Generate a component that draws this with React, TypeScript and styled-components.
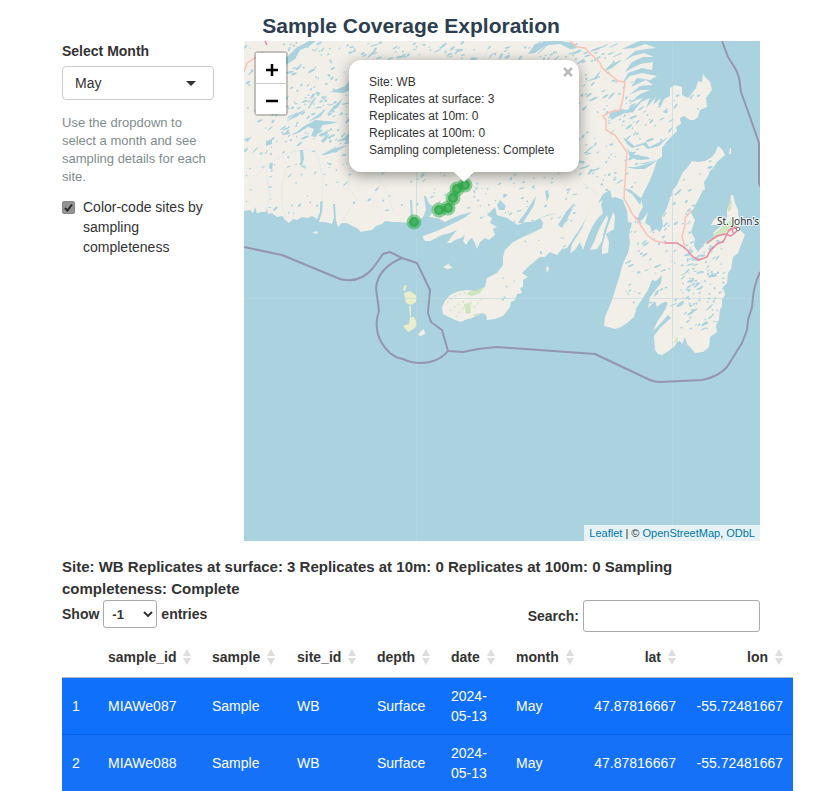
import React, { useState } from "react";
import styled, { createGlobalStyle } from "styled-components";

const GlobalStyle = createGlobalStyle`
  *, *::before, *::after { box-sizing: border-box; }
  body {
    margin: 0;
    background: #fff;
    color: #333;
    font: 14px/20px "Liberation Sans", Arial, sans-serif;
    overflow-x: hidden;
  }
`;

const Page = styled.main`
  padding: 14px 60px 0 62px;
`;

const Title = styled.h1`
  margin: 0 0 3px;
  font-size: 21px;
  line-height: 24px;
  text-align: center;
  color: #2c3e50;
`;

const Explorer = styled.section`
  display: grid;
  grid-template-columns: 152px minmax(0, 1fr);
  column-gap: 30px;
`;

const Sidebar = styled.aside`
  display: flex;
  flex-direction: column;
`;

const FieldLabel = styled.label`
  font-weight: bold;
  margin-bottom: 5px;
`;

const SelectShell = styled.span<{ $caretGap: number }>`
  display: inline-grid;
  align-items: center;
  > * { grid-area: 1 / 1; }
  > svg {
    justify-self: end;
    margin-right: ${(p) => p.$caretGap}px;
    pointer-events: none;
  }
`;

const MonthSelect = styled.select`
  appearance: none;
  width: 100%;
  height: 34px;
  padding: 0 36px 0 12px;
  border: 1px solid #ccc;
  border-radius: 4px;
  background: #fff;
  color: #333;
  font: inherit;
`;

const HelpText = styled.p`
  margin: 14px 0 11px;
  font-size: 13px;
  line-height: 18px;
  color: #7f8c8d;
`;

const CheckLabel = styled.label`
  display: flex;
  align-items: flex-start;
  gap: 8px;
`;

const CheckShell = styled.span`
  display: grid;
  flex: none;
  margin-top: 4px;
  > * { grid-area: 1 / 1; }
  > svg { pointer-events: none; }
`;

const CheckInput = styled.input`
  appearance: none;
  width: 13px;
  height: 13px;
  margin: 0;
  border: 1px solid #888;
  border-radius: 2px;
  &:checked { background: #929292; }
  &:not(:checked) + svg { visibility: hidden; }
`;

const MapFrame = styled.div`
  position: relative;
  height: 500px;
  overflow: hidden;
  background: #aad3df;
  font-size: 12px;
`;

const MapDrawing = styled.svg`
  display: block;
  width: 100%;
  height: 100%;
`;

const ZoomControl = styled.div`
  position: absolute;
  top: 10px;
  left: 10px;
  display: flex;
  flex-direction: column;
  border: 2px solid rgba(0, 0, 0, 0.2);
  border-radius: 4px;
  background-clip: padding-box;
`;

const ZoomButton = styled.button`
  display: grid;
  place-items: center;
  width: 30px;
  height: 30px;
  padding: 3px 0 0 1px;
  border: 0;
  background: #fff;
  color: #000;
  & + & {
    height: 31px;
    border-top: 1px solid #ccc;
  }
`;

const Popup = styled.div`
  position: absolute;
  top: 19px;
  left: 105px;
  width: 230px;
  padding: 14px 20px 13px;
  border-radius: 12px;
  background: #fff;
  box-shadow: 0 3px 14px rgba(0, 0, 0, 0.4);
  line-height: 17px;
  white-space: nowrap;
`;

const PopupTip = styled.svg`
  position: absolute;
  top: 100%;
  left: 50%;
  margin-left: -10px;
`;

const PopupClose = styled.button`
  position: absolute;
  top: 7px;
  right: 6px;
  display: grid;
  padding: 0;
  border: 0;
  background: none;
  color: #bbb;
`;

const Attribution = styled.div`
  position: absolute;
  right: 0;
  bottom: 0;
  padding: 0 5px;
  background: rgba(255, 255, 255, 0.7);
  font-size: 11px;
  line-height: 16px;
  a {
    color: #0078a8;
    text-decoration: none;
  }
`;

const Summary = styled.p`
  margin: 15px 0 0;
  font-size: 15px;
  font-weight: bold;
  line-height: 22px;
`;

const TableControls = styled.div`
  display: flex;
  justify-content: space-between;
  font-weight: bold;
`;

const ControlLabel = styled.label`
  display: flex;
  align-items: center;
  align-self: flex-start;
  gap: 4px;
`;

const LengthSelect = styled.select`
  appearance: none;
  width: 54px;
  height: 28px;
  padding: 0 20px 0 8px;
  border: 1px solid #aaa;
  border-radius: 3px;
  background: #fff;
  color: #333;
  font: bold 13px "Liberation Sans", Arial, sans-serif;
`;

const SearchInput = styled.input`
  width: 177px;
  height: 32px;
  padding: 5px;
  border: 1px solid #aaa;
  border-radius: 3px;
  font: inherit;
`;

const DataTable = styled.table`
  width: 100%;
  margin-top: 5px;
  border-collapse: separate;
  border-spacing: 0;
`;

const HeadCell = styled.th<{ $numeric?: boolean; $width: number }>`
  min-width: ${(p) => p.$width}px;
  padding: 10px;
  border-bottom: 1px solid #b5b5b5;
  text-align: ${(p) => (p.$numeric ? "right" : "left")};
`;

const SortButton = styled.button`
  display: inline-flex;
  align-items: center;
  gap: 7px;
  height: 20px;
  padding: 0;
  border: 0;
  background: none;
  color: #333;
  font: inherit;
  vertical-align: top;
`;

const BodyRow = styled.tr<{ $first: boolean }>`
  background: ${(p) => (p.$first ? "#0f70fb" : "#1572f8")};
  color: #fff;
`;

const Cell = styled.td<{ $numeric?: boolean; $divider?: boolean }>`
  height: ${(p) => (p.$divider ? 57 : 56)}px;
  padding: 8px 10px;
  border-top: ${(p) => (p.$divider ? "1px solid #0a60e2" : "0")};
  text-align: ${(p) => (p.$numeric ? "right" : "left")};
`;

const columns = [
  { key: "n", title: "", width: 36 },
  { key: "sample_id", title: "sample_id", width: 104 },
  { key: "sample", title: "sample", width: 85 },
  { key: "site_id", title: "site_id", width: 80 },
  { key: "depth", title: "depth", width: 74 },
  { key: "date", title: "date", width: 65 },
  { key: "month", title: "month", width: 78 },
  { key: "lat", title: "lat", width: 102, numeric: true },
  { key: "lon", title: "lon", width: 107, numeric: true },
];

const rows: Record<string, string>[] = ["MIAWe087", "MIAWe088"].map((id, i) => ({
  n: String(i + 1),
  sample_id: id,
  sample: "Sample",
  site_id: "WB",
  depth: "Surface",
  date: "2024-05-13",
  month: "May",
  lat: "47.87816667",
  lon: "-55.72481667",
}));

const MAINLAND =
  "M244 41V211L250 210 253 213 255 207 257 213 262 212 266 212 267 208 268 214 272 213 277 217 283 216 284 219 289 223 293 219 297 220 302 217 308 218 312 216 317 219 320 212 320 202 323 201 322 212 319 222 325 222 332 224 334 217 333 204 335 204 336 220 338 227 342 223 347 223 352 226 357 228 361 232 365 231 372 230 376 226 382 224 385 221 393 222 400 222 407 223 411 220 410 200 412 200 413 220 417 222 423 217 426 210 424 196 426 196 429 204 433 206 432 213 429 217 437 218 445 222 453 218 460 215 472 212 464 218 450 225 437 231 423 236 423 238 425 241 430 241 436 238 442 235 450 233 457 230 452 236 447 243 451 243 455 240 461 238 465 235 463 241 466 245 469 240 472 238 475 243 477 249 480 242 485 238 489 240 495 235 493 229 497 227 490 223 492 218 487 215 492 210 495 207 497 215 507 218 513 222 518 225 525 222 533 222 538 219 547 215 557 213 549 218 543 222 542 228 532 233 523 237 513 242 505 250 503 257 503 265 497 273 487 278 485 287 476 291 467 290 459 291 450 295 445 301 442 307 443 314 451 318 460 322 468 319 472 318 482 313 486 315 487 320 495 319 503 316 510 307 511 302 515 300 517 294 522 293 520 288 523 287 523 280 528 277 522 273 528 267 540 257 545 257 550 252 557 255 562 249 567 247 573 237 578 232 585 220 590 208 588 213 582 228 572 244 570 253 575 250 580 242 583 250 588 236 592 227 597 219 603 213 601 205 603 200 598 203 603 194 610 190 612 198 615 197 623 200 625 206 627 210 628 222 632 223 629 234 630 243 628 253 624 261 622 267 619 278 612 300 605 317 604 326 608 327 615 329 621 327 627 323 634 317 637 307 648 290 650 285 652 280 656 281 662 275 661 283 658 287 650 297 648 308 655 301 657 307 662 303 668 303 665 310 657 322 653 331 659 325 668 315 671 318 660 328 654 336 655 350 658 354 662 355 667 352 674 347 677 342 680 341 682 344 685 337 687 344 690 347 695 353 703 352 709 347 710 337 717 332 716 326 719 320 720 309 722 307 722 300 725 295 723 287 727 283 728 273 731 269 733 257 738 253 742 242 745 235 740 230 739 220 738 210 735 203 733 195 731 195 730 202 727 210 727 220 721 226 713 233 714 237 705 243 698 252 694 246 695 239 691 232 695 220 691 213 695 206 698 200 703 190 705 190 704 182 707 178 710 171 713 168 717 162 725 155 722 149 718 146 715 153 712 157 705 161 698 162 692 161 687 168 683 172 680 178 677 185 673 190 670 198 667 208 662 217 663 226 660 232 656 229 652 232 650 226 645 223 648 212 643 219 637 224 639 214 643 207 641 198 644 192 650 180 654 170 657 160 645 164 638 164 657 160 662 157 662 148 667 141 677 131 676 127 681 124 680 118 684 116 690 120 694 120 698 117 700 110 707 107 706 98 712 90 710 82 706 78 703 74 702 82 698 81 696 88 693 92 688 98 682 95 682 87 675 85 670 88 670 96 664 99 661 106 658 105 661 98 653 105 656 97 646 108 650 98 641 102 633 112 625 113 617 113 608 119 610 114 619 111 627 110 637 104 643 98 636 100 628 105 640 94 650 90 640 90 629 95 640 86 653 85 646 80 631 87 637 78 650 80 657 76 642 73 630 76 622 84 628 73 642 68 652 70 653 62 640 64 625 72 632 62 643 57 654 57 644 53 633 56 624 61 635 51 646 49 656 48 645 44 634 48 622 49 637 42 640 41Z";

const ISLANDS = [
  "M590 250L594 242 599 229 607 215 608 219 604 231 602 241 597 249Z",
  "M613 212L615 216 614 229 606 234 609 242 608 253 602 254 602 247 606 232Z",
  "M443 267L447 265 448 263 450 266 453 268 447 269Z",
  "M540 218L560 212 570 215 564 226 545 226Z",
  "M580 236L588 222 590 218 584 236Z",
  "M570 233L582 221 581 225 573 239 567 248 563 249Z",
  "M546 268L548 266 549 269 547 273Z",
  "M713 221L718 216 722 219 716 225 711 225Z",
  "M312 233L317 231 318 234Z",
  "M730 148L731 148 731 154 729 154Z",
];

const INLETS = [
  "M286 58L296 48 309 41H316L308 47 300 50 295 59 286 65 280 69 286 61Z",
  "M330 92L345 86 350 80 354 78 350 90 343 93Z",
  "M528 54L535 44 549 41H561L572 43 577 48 570 49 560 44 549 45 542 48 535 53 528 54Z",
  "M623 137L630 142 634 146 646 142 649 147 660 142 668 137 659 146 648 149 643 145 632 148 627 144Z",
  "M627 147L631 154 648 157 650 159 641 160 630 158Z",
  "M626 167L635 167 650 163 657 161 645 169 635 169Z",
  "M622 188L631 190 642 199 640 205 632 194Z",
  "M293 135L304 126 316 120 325 121 338 122 331 124 322 125 320 130 316 137 311 136 314 129 308 127 300 132Z",
  "M308 122L316 116 326 109 320 117Z",
  "M286 122L294 115 306 109 298 116Z",
  "M326 115L333 107 343 98 338 107Z",
  "M321 155L332 149 347 145 338 151 325 155Z",
  "M343 139L349 133 352 132 347 142Z",
  "M300 150L303 150 304 159 301 168Z",
  "M270 163L273 163 272 170 269 168Z",
  "M244 139L252 137 247 142Z",
  "M266 141L272 139 272 144 266 146Z",
  "M545 191L548 190 549 196 547 202Z",
  "M518 223L527 210 536 196 534 205 523 223Z",
  "M497 205L500 200 506 206 504 210 499 210Z",
  "M610 113L622 109 632 111 622 114 611 120Z",
  "M603 72L611 64 622 60 612 68Z",
  "M584 82L594 78 601 70 597 79Z",
  "M558 225L566 212 575 202 570 214 562 228Z",
];

const GREENS = [
  "M727 203L732 200 731 210 728 212Z",
  "M705 243L713 234 718 231 723 225 733 219 737 227 725 233 715 239 706 245Z",
  "M466 294L474 289 485 287 480 293 472 296Z",
  "M464 304L470 303 471 313 466 314Z",
  "M674 343L677 336 678 341Z",
  "M680 275L684 273 683 276Z",
  "M473 315L479 313 477 318Z",
];

const PALE_ISLES = [
  "M404 293L410 291 417 296 416 302 411 305 406 303Z",
  "M410 317L414 317 417 323 415 328 408 332 403 326 409 324Z",
  "M403 290L404 286 407 285 405 291Z",
  "M409 306L411 306 411 316 410 316Z",
];

const BOUNDARIES = [
  "M722 41L728 57 735 68Q740 77 740 85L741 92 750 117 759 143V183L761 188",
  "M244 247L282 255 340 279Q360 284 373 268L383 254 390 252 402 258 417 263 430 290 428 313 431 322 442 330 448 351 463 352 478 349 497 347 595 354 650 380Q655 382 660 382L702 380Q718 377 727 367L742 343 747 330 748 320 752 307 753 297Q754 286 760 272",
  "M402 258Q378 268 376 288L379 311Q371 335 390 353Q396 358 403 359Q415 365 430 362Q442 359 448 351",
];

const MAJOR_ROADS = [
  "M570 41L577 47 585 48 600 63 602 68 618 81 625 82 623 98 620 110 610 112 603 116 606 120V130L615 135 627 152 625 182 624 198 633 215 638 220 641 226 647 235 655 241 665 243",
  "M692 210L685 218 685 225 682 237 685 247",
  "M244 72L247 63 255 58 263 52",
];

const MOTORWAYS = [
  "M665 243H677L682 246 687 250 693 257 699 260 707 257 710 251 718 243 723 242 729 230 736 227 738 230 731 236 725 234 717 236 707 243",
  "M729 231L732 227 733 233",
  "M267 45L265 41",
];

const RIVERS = [
  "M287 223L282 205 282 184 286 172",
  "M322 201L323 180 319 160 314 150",
  "M342 222L350 208 358 200 348 188 350 172",
  "M265 212L270 195 266 170",
  "M256 175L270 163 288 153 298 151 308 149",
  "M393 212L389 195 380 180",
  "M470 192L462 184",
  "M400 59L415 47 425 42",
  "M484 58L488 47 495 42",
  "M570 163L582 182 598 195",
  "M690 320L700 296 702 280",
];

// Deterministic scatter of small lakes, stretched along the south-west to north-east grain.
function scatterLakes() {
  let seed = 4711;
  const next = () => {
    seed = (seed * 16807) % 2147483647;
    return seed / 2147483647;
  };
  const areas = [
    { x: 244, y: 42, w: 110, h: 60, n: 90, size: 3 },
    { x: 270, y: 95, w: 85, h: 48, n: 70, size: 5 },
    { x: 244, y: 100, w: 110, h: 70, n: 70, size: 3 },
    { x: 350, y: 42, w: 60, h: 22, n: 24, size: 4 },
    { x: 244, y: 160, w: 175, h: 55, n: 45, size: 2 },
    { x: 410, y: 42, w: 210, h: 20, n: 80, size: 4 },
    { x: 415, y: 172, w: 160, h: 50, n: 70, size: 2 },
    { x: 578, y: 60, w: 60, h: 130, n: 95, size: 4 },
    { x: 620, y: 95, w: 85, h: 45, n: 40, size: 3 },
    { x: 625, y: 210, w: 75, h: 100, n: 100, size: 3 },
    { x: 680, y: 240, w: 45, h: 90, n: 110, size: 3 },
    { x: 665, y: 160, w: 50, h: 70, n: 26, size: 3 },
    { x: 500, y: 220, w: 75, h: 80, n: 30, size: 1 },
  ];
  return areas.flatMap((a) =>
    Array.from({ length: a.n }, () => {
      const x = a.x + next() * a.w;
      const y = a.y + next() * a.h;
      const rx = 0.7 + next() * next() * a.size * 1.5;
      const ry = 0.5 + next() * 0.7;
      return { x, y, rx, ry, turn: -55 + next() * 45 };
    })
  );
}

const LAKES = scatterLakes();

const SITES = [
  [414, 222],
  [439, 210],
  [448, 208],
  [453, 198],
  [457, 189],
  [465, 185],
];

function CoastMap({ colored }: { colored: boolean }) {
  const tone = colored ? "#28a745" : "#3388ff";
  return (
    <MapDrawing viewBox="244 41 516 500" preserveAspectRatio="xMinYMin slice" role="img" aria-label="Map of sampling sites">
      <defs>
        <clipPath id="land">
          <path d={MAINLAND} />
        </clipPath>
      </defs>
      <g fill="#f2efe9">
        <path d={MAINLAND} />
        {ISLANDS.map((d) => <path key={d} d={d} />)}
        <path d="M418 335L421 331 424 329 425 334 421 336Z" />
      </g>
      <g fill="#e9edc9">{PALE_ISLES.map((d) => <path key={d} d={d} />)}</g>
      <g clipPath="url(#land)">
        <g fill="none" stroke="#dfe8e6" strokeWidth="0.8">
          {RIVERS.map((d) => <path key={d} d={d} />)}
        </g>
        <g fill="#aad3df">
          {LAKES.map((l, i) => (
            <ellipse key={i} rx={l.rx} ry={l.ry} transform={`translate(${l.x} ${l.y}) rotate(${l.turn})`} />
          ))}
          {INLETS.map((d) => <path key={d} d={d} />)}
        </g>
        <g fill="#cfe5bd">{GREENS.map((d) => <path key={d} d={d} />)}</g>
        <g fill="none" stroke="#d8e6c4" strokeWidth="1.5" strokeDasharray="2 3">
          <path d="M447 303L456 295 468 292M450 311L458 304 466 301M456 317L462 309 472 302M474 308L482 298" />
        </g>
      </g>
      <g stroke="#bcd8dd" strokeWidth="0.6">
        <path d="M416.500 172V541M672.500 41V541M244 298.500H760" />
      </g>
      <g fill="none" stroke="#f9c3b6" strokeWidth="1.500">
        {MAJOR_ROADS.map((d) => <path key={d} d={d} />)}
      </g>
      <g fill="none" stroke="#ea87a0" strokeWidth="1.500">
        {MOTORWAYS.map((d) => <path key={d} d={d} />)}
      </g>
      <g fill="none" stroke="#9595b2" strokeWidth="2" strokeLinejoin="round">
        {BOUNDARIES.map((d) => <path key={d} d={d} />)}
      </g>
      <circle cx="738" cy="229" r="1.800" fill="#fff" stroke="#777" />
      <text x="717" y="225" fontFamily="Noto Sans, sans-serif" fontSize="10" fill="#333" stroke="#fff" strokeWidth="2" strokeOpacity="0.7" paintOrder="stroke">
        St. John's
      </text>
      {SITES.map(([cx, cy]) => (
        <circle key={cx} cx={cx} cy={cy} r="5" fill={tone} fillOpacity="0.8" stroke={tone} strokeOpacity="0.5" strokeWidth="5" />
      ))}
    </MapDrawing>
  );
}

function SortIcon() {
  return (
    <svg width="8" height="16" viewBox="0 0 8 16" fill="#ddd" aria-hidden="true">
      <path d="M4 0L8 7H0ZM0 9H8L4 16Z" />
    </svg>
  );
}

export default function App() {
  const [colored, setColored] = useState(true);
  const [popupOpen, setPopupOpen] = useState(true);

  return (
    <>
      <GlobalStyle />
      <Page>
        <Title>Sample Coverage Exploration</Title>
        <Explorer>
          <Sidebar>
            <FieldLabel htmlFor="month">Select Month</FieldLabel>
            <SelectShell $caretGap={18}>
              <MonthSelect id="month" defaultValue="May">
                <option>May</option>
                <option>June</option>
                <option>July</option>
              </MonthSelect>
              <svg width="10" height="5" viewBox="0 0 10 5" aria-hidden="true">
                <path d="M0 0H10L5 5Z" fill="#333" />
              </svg>
            </SelectShell>
            <HelpText>Use the dropdown to select a month and see sampling details for each site.</HelpText>
            <CheckLabel>
              <CheckShell>
                <CheckInput type="checkbox" checked={colored} onChange={(e) => setColored(e.target.checked)} />
                <svg width="13" height="13" viewBox="0 0 13 13" aria-hidden="true">
                  <path d="M3 7L5.500 9.500L10 3.500" fill="none" stroke="#2b2b2b" strokeWidth="2" />
                </svg>
              </CheckShell>
              <span>Color-code sites by sampling completeness</span>
            </CheckLabel>
          </Sidebar>
          <MapFrame>
            <CoastMap colored={colored} />
            <ZoomControl>
              <ZoomButton aria-label="Zoom in">
                <svg width="12" height="12" viewBox="0 0 12 12" aria-hidden="true">
                  <path d="M0 6H12M6 0V12" stroke="#000" strokeWidth="2.500" />
                </svg>
              </ZoomButton>
              <ZoomButton aria-label="Zoom out">
                <svg width="12" height="12" viewBox="0 0 12 12" aria-hidden="true">
                  <path d="M0 6H12" stroke="#000" strokeWidth="2.500" />
                </svg>
              </ZoomButton>
            </ZoomControl>
            {popupOpen && (
              <Popup>
                <div>Site: WB</div>
                <div>Replicates at surface: 3</div>
                <div>Replicates at 10m: 0</div>
                <div>Replicates at 100m: 0</div>
                <div>Sampling completeness: Complete</div>
                <PopupTip width="20" height="10" viewBox="0 0 20 10" aria-hidden="true">
                  <path d="M0 0H20L10 10Z" fill="#fff" />
                </PopupTip>
                <PopupClose aria-label="Close popup" onClick={() => setPopupOpen(false)}>
                  <svg width="10" height="10" viewBox="0 0 10 10" aria-hidden="true">
                    <path d="M1 1L9 9M9 1L1 9" stroke="currentColor" strokeWidth="2.500" />
                  </svg>
                </PopupClose>
              </Popup>
            )}
            <Attribution>
              <a href="#leaflet">Leaflet</a> | © <a href="#osm">OpenStreetMap</a>, <a href="#odbl">ODbL</a>
            </Attribution>
          </MapFrame>
        </Explorer>
        <Summary>
          Site: WB Replicates at surface: 3 Replicates at 10m: 0 Replicates at 100m: 0 Sampling completeness: Complete
        </Summary>
        <TableControls>
          <ControlLabel>
            Show
            <SelectShell $caretGap={4}>
              <LengthSelect defaultValue="-1">
                <option>-1</option>
                <option>10</option>
                <option>25</option>
              </LengthSelect>
              <svg width="10" height="6" viewBox="0 0 10 6" aria-hidden="true">
                <path d="M1 1L5 5L9 1" fill="none" stroke="#333" strokeWidth="2" />
              </svg>
            </SelectShell>
            entries
          </ControlLabel>
          <ControlLabel>
            Search:
            <SearchInput type="search" />
          </ControlLabel>
        </TableControls>
        <DataTable>
          <thead>
            <tr>
              {columns.map((c) => (
                <HeadCell key={c.key} $numeric={c.numeric} $width={c.width}>
                  {c.title && (
                    <SortButton>
                      {c.title}
                      <SortIcon />
                    </SortButton>
                  )}
                </HeadCell>
              ))}
            </tr>
          </thead>
          <tbody>
            {rows.map((row, i) => (
              <BodyRow key={row.n} $first={i === 0}>
                {columns.map((c) => (
                  <Cell key={c.key} $numeric={c.numeric} $divider={i > 0}>{row[c.key]}</Cell>
                ))}
              </BodyRow>
            ))}
          </tbody>
        </DataTable>
      </Page>
    </>
  );
}
